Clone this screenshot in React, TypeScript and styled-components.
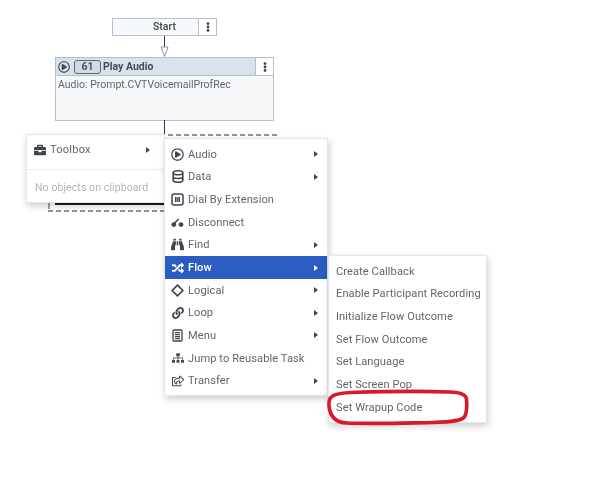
import React from "react";
import styled, { createGlobalStyle } from "styled-components";
import {
  FaBinoculars,
  FaBriefcase,
  FaEllipsisV,
  FaLink,
  FaRandom,
  FaRegPlayCircle,
  FaRegShareSquare,
  FaSitemap,
} from "react-icons/fa";

const GlobalStyle = createGlobalStyle`
  html, body {
    margin: 0;
    padding: 0;
    background: #fff;
  }
  body {
    font-family: Roboto, "Liberation Sans", sans-serif;
  }
`;

// the reference is a soft, rescaled capture
const Canvas = styled.div`
  position: relative;
  width: 600px;
  height: 491px;
  overflow: hidden;
  background: #fff;
  color: #5f6670;
  font-size: 11.1px;
  filter: blur(0.35px);
`;

const StartNode = styled.div`
  position: absolute;
  left: 112px;
  top: 18px;
  width: 105px;
  height: 18px;
  box-sizing: border-box;
  display: flex;
  border: 1px solid #b4c0cf;
  background: #f6f8fb;
`;

const StartLabel = styled.div`
  flex: 1;
  text-align: center;
  font-size: 10.5px;
  line-height: 16px;
  font-weight: 500;
  color: #3f4650;
  padding-left: 18px;
`;

const KebabButton = styled.div`
  width: 17px;
  align-self: stretch;
  display: flex;
  align-items: center;
  justify-content: center;
  background: #fff;
  border-left: 1px solid #b4c0cf;
  color: #3c434d;
`;

const Connector = styled.div<{ $top: number; $height: number }>`
  position: absolute;
  left: 164px;
  top: ${(p) => p.$top}px;
  width: 1px;
  height: ${(p) => p.$height}px;
  background: #333a44;
`;

const ArrowHead = styled.svg`
  position: absolute;
  left: 160px;
  top: 46px;
`;

const AudioNode = styled.div`
  position: absolute;
  left: 55px;
  top: 57px;
  width: 219px;
  height: 64px;
  box-sizing: border-box;
  border: 1px solid #b4c0cf;
  background: #f7f8fa;
`;

const AudioHeader = styled.div`
  height: 17px;
  display: flex;
  align-items: center;
  gap: 2px;
  padding-left: 2px;
  background: #d9e2ec;
  border-bottom: 1px solid #b4c0cf;
  color: #3f4650;
`;

const AudioTitle = styled.span`
  flex: 1;
  font-size: 10.5px;
  font-weight: 700;
  color: #444c57;
`;

const StepBadge = styled.span`
  width: 27px;
  height: 14px;
  margin-left: 2px;
  box-sizing: border-box;
  border: 1px solid #5d6670;
  border-radius: 3px;
  background: #d3dbe4;
  text-align: center;
  font-size: 10.5px;
  line-height: 12px;
  font-weight: 700;
  color: #4a525d;
`;

const AudioBody = styled.div`
  padding: 2px 2px;
  font-size: 10.5px;
  line-height: 14px;
  color: #5f6670;
`;

const DashedLine = styled.div<{ $left: number; $top: number; $width: number }>`
  position: absolute;
  left: ${(p) => p.$left}px;
  top: ${(p) => p.$top}px;
  width: ${(p) => p.$width}px;
  height: 2px;
  background: repeating-linear-gradient(90deg, #8c96a3 0 5px, transparent 5px 8px);
`;

const DashedStub = styled.div`
  position: absolute;
  left: 48px;
  top: 203px;
  width: 2px;
  height: 6px;
  background: #9aa3ae;
`;

const BlackBar = styled.div`
  position: absolute;
  left: 55px;
  top: 202px;
  width: 110px;
  height: 3px;
  background: #1d1d22;
`;

const Menu = styled.div<{ $left: number; $top: number; $width: number; $height: number }>`
  position: absolute;
  left: ${(p) => p.$left}px;
  top: ${(p) => p.$top}px;
  width: ${(p) => p.$width}px;
  height: ${(p) => p.$height}px;
  box-sizing: border-box;
  padding: 4px 0;
  background: #fff;
  border: 1px solid #e4e6e9;
  box-shadow: 1px 3px 7px rgba(0, 0, 0, 0.2);
`;

const ToolboxPanel = styled(Menu)`
  padding: 0;
`;

const Row = styled.div<{ $active?: boolean }>`
  height: 22.65px;
  display: flex;
  align-items: center;
  padding: 0 9px 0 6px;
  letter-spacing: 0.08px;
  background: ${(p) => (p.$active ? "#2a5cc2" : "transparent")};
  color: ${(p) => (p.$active ? "#fff" : "#5f6670")};
  font-weight: ${(p) => (p.$active ? 500 : 400)};
`;

const SubRow = styled(Row)`
  padding: 0 0 0 7px;
`;

const RowIcon = styled.span<{ $active?: boolean }>`
  width: 13px;
  margin-right: 4px;
  display: flex;
  align-items: center;
  justify-content: center;
  color: ${(p) => (p.$active ? "#fff" : "#3f4650")};
`;

const RowLabel = styled.span`
  flex: 1;
  white-space: nowrap;
`;

const Caret = styled.span<{ $active?: boolean }>`
  width: 0;
  height: 0;
  border-left: 4px solid ${(p) => (p.$active ? "#fff" : "#3f4650")};
  border-top: 3.5px solid transparent;
  border-bottom: 3.5px solid transparent;
`;

const ToolboxRow = styled.div`
  height: 29px;
  padding: 0 14px 0 6px;
  display: flex;
  align-items: center;
  margin-bottom: 5px;
  letter-spacing: 0.2px;
`;

const ToolboxDivider = styled.div`
  height: 1px;
  background: #eceef0;
`;

const ClipboardNote = styled.div`
  padding-left: 8px;
  height: 34px;
  display: flex;
  align-items: center;
  font-size: 10.5px;
  letter-spacing: 0.1px;
  color: #aeb4bc;
`;

const Highlight = styled.svg`
  position: absolute;
  left: 322px;
  top: 386px;
`;

const DatabaseIcon = () => (
  <svg width="12" height="13" viewBox="0 0 12 13" fill="none" stroke="currentColor" strokeWidth="1.6">
    <ellipse cx="6" cy="2.8" rx="4.8" ry="2" />
    <path d="M1.2 2.8v7.4c0 1.1 2.1 2 4.8 2s4.8-.9 4.8-2V2.8M1.2 6.5c0 1.1 2.1 2 4.8 2s4.8-.9 4.8-2" />
  </svg>
);

const DialIcon = () => (
  <svg width="13" height="13" viewBox="0 0 13 13">
    <rect x="1" y="1" width="11" height="11" rx="2" fill="none" stroke="currentColor" strokeWidth="1.5" />
    <path d="M4 4h5v5H4z" fill="currentColor" />
    <path d="M5.7 4v5M7.3 4v5" stroke="#fff" strokeWidth=".5" />
  </svg>
);

const DisconnectIcon = () => (
  <svg width="13" height="11" viewBox="0 0 13 11" fill="currentColor">
    <circle cx="2.8" cy="7.6" r="2.4" />
    <circle cx="10" cy="7.6" r="2.4" />
    <path d="M3 5.5 7.2 1.6l1 1-4 4z" />
  </svg>
);

const DiamondIcon = () => (
  <svg width="13" height="13" viewBox="0 0 13 13" fill="none" stroke="currentColor" strokeWidth="1.7">
    <path d="M6.5 1.2 11.8 6.5 6.5 11.800 1.2 6.500z" />
  </svg>
);

const MenuListIcon = () => (
  <svg width="11" height="13" viewBox="0 0 11 13" fill="none" stroke="currentColor" strokeWidth="1.3">
    <rect x="1" y="1" width="9" height="11" rx="1" />
    <path d="M3 3.600h5M3 5.600h5M3 7.600h5M3 9.600h5" />
  </svg>
);

type Item = { label: string; icon: React.ReactNode; more?: boolean; active?: boolean };

const items: Item[] = [
  { label: "Audio", icon: <FaRegPlayCircle size={13} />, more: true },
  { label: "Data", icon: <DatabaseIcon />, more: true },
  { label: "Dial By Extension", icon: <DialIcon /> },
  { label: "Disconnect", icon: <DisconnectIcon /> },
  { label: "Find", icon: <FaBinoculars size={13} />, more: true },
  { label: "Flow", icon: <FaRandom size={12} />, more: true, active: true },
  { label: "Logical", icon: <DiamondIcon />, more: true },
  { label: "Loop", icon: <FaLink size={12} />, more: true },
  { label: "Menu", icon: <MenuListIcon />, more: true },
  { label: "Jump to Reusable Task", icon: <FaSitemap size={12} /> },
  { label: "Transfer", icon: <FaRegShareSquare size={12} />, more: true },
];

const flowActions = [
  "Create Callback",
  "Enable Participant Recording",
  "Initialize Flow Outcome",
  "Set Flow Outcome",
  "Set Language",
  "Set Screen Pop",
  "Set Wrapup Code",
];

export default function App() {
  return (
    <Canvas>
      <GlobalStyle />
      <StartNode>
        <StartLabel>Start</StartLabel>
        <KebabButton>
          <FaEllipsisV size={10} />
        </KebabButton>
      </StartNode>
      <Connector $top={36} $height={11} />
      <ArrowHead width="9" height="11" viewBox="0 0 9 11">
        <path d="M1 1h7L4.500 10.500z" fill="#fff" stroke="#8d97a3" />
      </ArrowHead>
      <AudioNode>
        <AudioHeader>
          <FaRegPlayCircle size={12} />
          <StepBadge>61</StepBadge>
          <AudioTitle>Play Audio</AudioTitle>
          <KebabButton>
            <FaEllipsisV size={10} />
          </KebabButton>
        </AudioHeader>
        <AudioBody>Audio: Prompt.CVTVoicemailProfRec</AudioBody>
      </AudioNode>
      <Connector $top={120} $height={18} />
      <DashedLine $left={168} $top={134} $width={112} />
      <BlackBar />
      <DashedStub />
      <DashedLine $left={48} $top={210} $width={118} />

      <ToolboxPanel $left={26} $top={134} $width={139} $height={69}>
        <ToolboxRow>
          <RowIcon>
            <FaBriefcase size={12} />
          </RowIcon>
          <RowLabel>Toolbox</RowLabel>
          <Caret />
        </ToolboxRow>
        <ToolboxDivider />
        <ClipboardNote>No objects on clipboard</ClipboardNote>
      </ToolboxPanel>

      <Menu $left={164} $top={138} $width={164} $height={258}>
        {items.map((item) => (
          <Row key={item.label} $active={item.active}>
            <RowIcon $active={item.active}>{item.icon}</RowIcon>
            <RowLabel>{item.label}</RowLabel>
            {item.more && <Caret $active={item.active} />}
          </Row>
        ))}
      </Menu>

      <Menu $left={328} $top={255} $width={159} $height={168}>
        {flowActions.map((label) => (
          <SubRow key={label}>
            <RowLabel>{label}</RowLabel>
          </SubRow>
        ))}
      </Menu>

      <Highlight width="152" height="44" viewBox="0 0 152 44" fill="none">
        <path
          d="M7 20C6 11 10 7 30 6.500C62 5.500 100 5 128 6c10 .5 16 2 16.500 7c.5 5 0 13-1.500 17c-2 5-14 6-32 6.500c-30 .5-62 1.500-86 .5C14 36.500 8 31 7 20z"
          stroke="#d9182a"
          strokeWidth="3.6"
        />
      </Highlight>
    </Canvas>
  );
}
